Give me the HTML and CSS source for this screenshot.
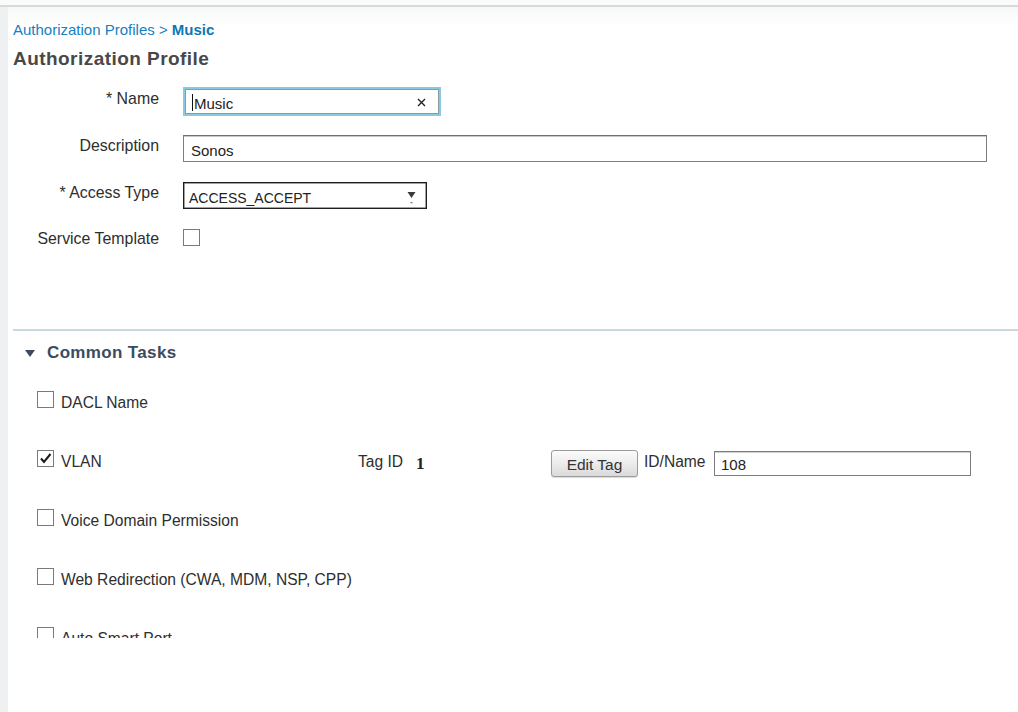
FILE: index.html
```html
<!DOCTYPE html>
<html lang="en">
<head>
<meta charset="utf-8">
<title>Authorization Profile</title>
<link rel="stylesheet" href="styles.css">
</head>
<body>
<div class="topbar"></div>
<div class="shell">
  <div class="strip"></div>
  <main class="main">
    <nav class="crumb"><a class="crumb-link" href="#">Authorization Profiles</a> &gt; <b class="crumb-cur">Music</b></nav>
    <h1 class="title">Authorization Profile</h1>

    <div class="form">
      <div class="row row-first">
        <label class="lbl lbl-name">* Name</label>
        <div class="field field-name">
          <span class="caret"></span>
          <span class="val">Music</span>
          <svg class="clear" width="9" height="9" viewBox="0 0 9 9"><path d="M1 1 L8 8 M8 1 L1 8" stroke="#222" stroke-width="1.4" fill="none"/></svg>
        </div>
      </div>
      <div class="row">
        <label class="lbl lbl-std">Description</label>
        <div class="field field-desc"><span class="val">Sonos</span></div>
      </div>
      <div class="row">
        <label class="lbl lbl-std">* Access Type</label>
        <div class="field field-select">
          <span class="val">ACCESS_ACCEPT</span>
          <svg class="arrow" width="9" height="16" viewBox="0 0 9 16"><path d="M0.5 3 L8.5 3 L4.5 9 Z" fill="#3a3a3a"/><rect x="3.5" y="13" width="2" height="1.3" fill="#777"/></svg>
        </div>
      </div>
      <div class="row row-last">
        <label class="lbl lbl-svc">Service Template</label>
        <span class="cb"></span>
      </div>
    </div>

    <hr class="sep">

    <h2 class="sect">
      <svg class="sect-tri" width="10" height="7" viewBox="0 0 10 7"><path d="M0 0 L10 0 L5 7 Z" fill="#3d4b5e"/></svg>
      <span>Common Tasks</span>
    </h2>

    <div class="tasks">
      <div class="task">
        <div class="task-check"><span class="cb"></span><span class="task-lbl">DACL Name</span></div>
      </div>
      <div class="task">
        <div class="task-check task-check-vlan"><span class="cb cb-on"><svg width="15" height="15" viewBox="0 0 15 15"><path d="M3 7.5 L6 11 L12.5 3" stroke="#1a1a1a" stroke-width="2" fill="none"/></svg></span><span class="task-lbl">VLAN</span></div>
        <div class="tag"><span class="task-lbl">Tag ID</span><span class="tag-num">1</span></div>
        <button class="btn" type="button">Edit Tag</button>
        <span class="task-lbl idname">ID/Name</span>
        <div class="field field-id"><span class="val">108</span></div>
      </div>
      <div class="task">
        <div class="task-check"><span class="cb"></span><span class="task-lbl">Voice Domain Permission</span></div>
      </div>
      <div class="task">
        <div class="task-check"><span class="cb"></span><span class="task-lbl">Web Redirection (CWA, MDM, NSP, CPP)</span></div>
      </div>
      <div class="task">
        <div class="task-check"><span class="cb"></span><span class="task-lbl">Auto Smart Port</span></div>
      </div>
    </div>
  </main>
</div>
</body>
</html>
```
FILE: styles.css
```css
* { box-sizing: border-box; }
html, body { margin: 0; padding: 0; background: #fff; }
body {
  font-family: "Liberation Sans", Arial, sans-serif;
  color: #2e2e2e;
  font-size: 15.5px;
  overflow: hidden;
}

.topbar {
  height: 7px;
  background: #fbfbfb;
  border-bottom: 2px solid #d9d9d9;
}

.shell {
  display: flex;
  min-height: calc(100vh - 7px);
}
.strip {
  flex: 0 0 8px;
  background: #eef0f2;
}
.main {
  flex: 1;
  padding: 14px 0 0 5px;
  background: linear-gradient(#f6f7f7 0, #fdfdfd 14px, #fff 20px);
}

.crumb {
  font-size: 15px;
  line-height: 18px;
  color: #1580c2;
}
.crumb-link { color: #1580c2; text-decoration: none; }
.crumb-cur { color: #0d77b5; font-weight: bold; }

.title {
  margin: 8px 0 0;
  font-size: 19px;
  line-height: 24px;
  font-weight: bold;
  letter-spacing: 0.45px;
  color: #484848;
}

.form { margin-top: 16px; }
.row {
  display: grid;
  grid-template-columns: 146px auto;
  column-gap: 24px;
  align-items: start;
  height: 47px;
}
.row-first { height: 48px; }
.row-last { height: 20px; }

.lbl {
  text-align: right;
  line-height: 20px;
  font-size: 15.9px;
  color: #2e2e2e;
}
.lbl-name { padding-top: 2px; }
.lbl-std { padding-top: 1px; }
.lbl-svc { padding-top: 0; }

.field {
  display: flex;
  align-items: center;
  background: #fff;
  font-size: 15px;
  color: #222;
  padding-top: 4px;
}
.val { line-height: 18px; }

.field-name {
  width: 258px;
  height: 29px;
  border: 2px solid #86cbe0;
  box-shadow: inset 0 0 0 1px #8e9a9f;
  padding-left: 7px;
  padding-right: 13px;
}
.caret {
  width: 1px;
  height: 17px;
  background: #111;
  margin-right: 1px;
  margin-top: -2px;
}
.field-name .val { flex: 1; }
.clear { margin-top: -3px; }

.field-desc {
  width: 804px;
  height: 27px;
  border: 1px solid #7e7e7e;
  border-top-color: #6f6f6f;
  box-shadow: inset 0 1px 0 #c8c8c8;
  padding-left: 7px;
}

.field-select {
  width: 244px;
  height: 27px;
  border: 1px solid #1e1e1e;
  box-shadow: inset 0 0 0 0.5px #444;
  padding-left: 5px;
  padding-right: 10px;
  justify-content: space-between;
  font-size: 14px;
  padding-top: 5px;
}
.arrow { margin-top: -2px; }

.cb {
  display: inline-flex;
  align-items: center;
  justify-content: center;
  width: 17px;
  height: 17px;
  flex: 0 0 17px;
  border: 1px solid #7a7a7a;
  background: #fff;
}

.sep {
  margin: 80px 0 0;
  border: 0;
  height: 2px;
  background: #c9d8e1;
}

.sect {
  margin: 11px 0 0;
  padding-left: 12px;
  display: flex;
  align-items: center;
  gap: 12px;
  height: 22px;
  font-size: 17px;
  line-height: 22px;
  font-weight: bold;
  letter-spacing: 0.35px;
  color: #3d4b5e;
}

.tasks {
  margin-top: 27px;
  padding-left: 24px;
  height: 247px;
  overflow: hidden;
}
.task {
  display: flex;
  align-items: flex-start;
  height: 59px;
}
.task-check {
  display: flex;
  align-items: flex-start;
  gap: 7px;
}
.task-check-vlan { flex: 0 0 321px; }
.task-lbl {
  line-height: 20px;
  padding-top: 2px;
  font-size: 15.6px;
  color: #2e2e2e;
  white-space: nowrap;
}

.tag {
  flex: 0 0 193px;
  display: flex;
  align-items: flex-start;
  gap: 13px;
}
.tag-num {
  font-family: "Liberation Serif", "Times New Roman", serif;
  font-weight: bold;
  font-size: 17px;
  line-height: 20px;
  padding-top: 4px;
  color: #222;
}

.btn {
  flex: 0 0 87px;
  width: 87px;
  height: 27px;
  margin: 0;
  padding: 2px 0 0;
  border: 1px solid #9c9c9c;
  border-radius: 3px;
  background: linear-gradient(#fbfbfb, #ececec 50%, #dadada);
  box-shadow: 0 1px 1px rgba(0,0,0,0.15);
  font-family: "Liberation Sans", Arial, sans-serif;
  font-size: 15.5px;
  color: #333;
}

.idname {
  flex: 0 0 76px;
  padding-left: 6px;
}

.field-id {
  width: 257px;
  height: 25px;
  margin-top: 1px;
  border: 1px solid #7e7e7e;
  box-shadow: inset 0 1px 0 #cfcfcf;
  padding-left: 6px;
  padding-top: 3px;
}
```
